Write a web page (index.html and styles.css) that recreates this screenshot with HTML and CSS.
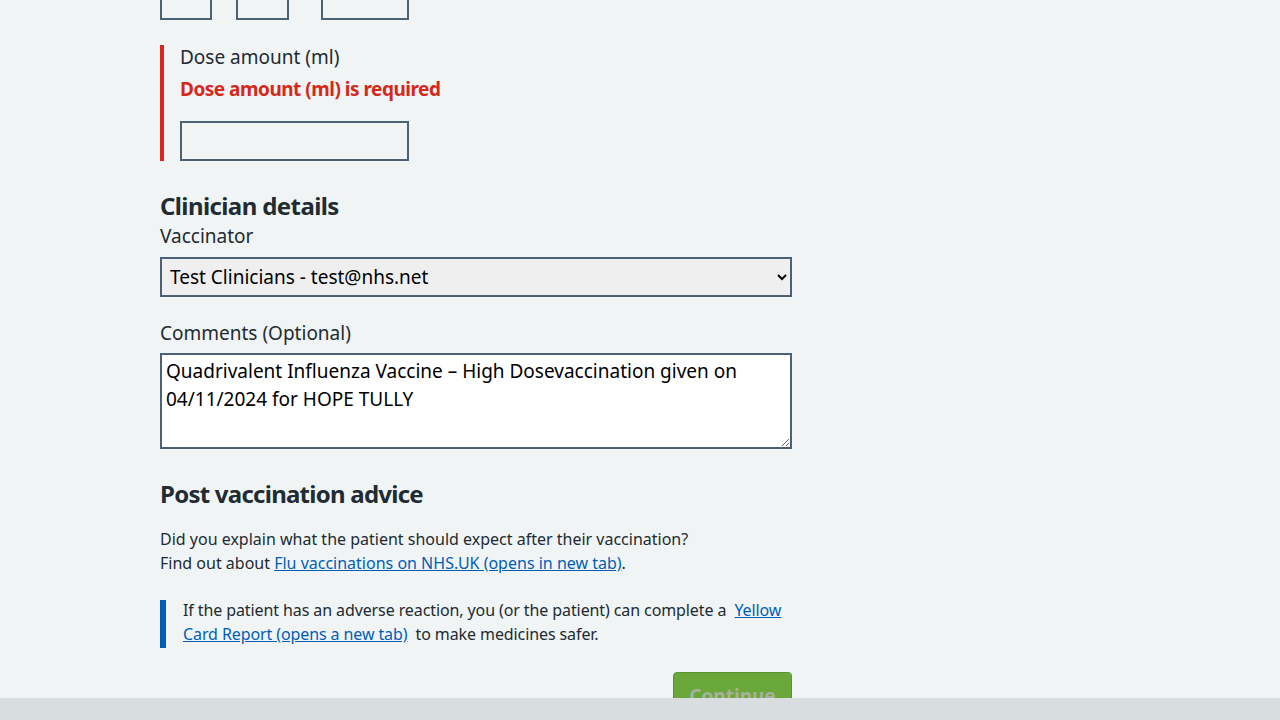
FILE: index.html
```html
<!DOCTYPE html>
<html lang="en">
<head>
<meta charset="utf-8">
<title>Record vaccination</title>
<link rel="stylesheet" href="styles.css">
</head>
<body>
<main class="page">
  <div class="date-row">
    <div class="date-box day"></div>
    <div class="date-box month"></div>
    <div class="date-box year"></div>
  </div>

  <div class="form-group error-group">
    <label class="label label-dose">Dose amount (ml)</label>
    <span class="error-message">Dose amount (ml) is required</span>
    <input class="input dose" type="text">
  </div>

  <h2 class="heading heading-clinician">Clinician details</h2>
  <div class="form-group">
    <label class="label label-select">Vaccinator</label>
    <select class="select">
      <option>Test Clinicians - test@nhs.net</option>
    </select>
  </div>

  <div class="form-group">
    <label class="label label-comments">Comments (Optional)</label>
    <textarea class="textarea" rows="3">Quadrivalent Influenza Vaccine – High Dosevaccination given on 04/11/2024 for HOPE TULLY</textarea>
  </div>

  <h2 class="heading heading-post">Post vaccination advice</h2>
  <p class="body">Did you explain what the patient should expect after their vaccination?<br>Find out about <a href="#">Flu vaccinations on NHS.UK (opens in new tab)</a>.</p>

  <div class="inset">
    <p>If the patient has an adverse reaction, you (or the patient) can complete a&nbsp; <a href="#">Yellow Card Report (opens a new tab)</a> &nbsp;to make medicines safer.</p>
  </div>

  <div class="actions">
    <button class="button" type="button">Continue</button>
  </div>
</main>
<div class="bottom-bar"></div>
</body>
</html>
```

FILE: styles.css
```css
html, body {
  margin: 0;
  padding: 0;
  background: #f0f4f5;
  height: 720px;
  overflow: hidden;
}

body {
  font-family: "Noto Sans", "Liberation Sans", Arial, sans-serif;
  color: #212b32;
}

.page {
  width: 632px;
  margin: -20px 0 0 160px;
}

.date-row {
  display: flex;
  gap: 24px;
}

.date-box {
  height: 40px;
  box-sizing: border-box;
  border: 2px solid #4c6272;
}

.day { width: 52px; }
.month { width: 53px; margin-right: 8px; }
.year { width: 88px; }

.form-group {
  display: flex;
  flex-direction: column;
  align-items: flex-start;
}

.error-group {
  margin-top: 25px;
  border-left: 4px solid #d5281b;
  padding-left: 16px;
}

.label {
  font-size: 19px;
  line-height: 24px;
}

.label-dose { margin-bottom: 8px; }
.label-select { margin-bottom: 9px; }
.label-comments { margin-bottom: 8px; }

.error-message {
  color: #d5281b;
  font-weight: bold;
  font-size: 19px;
  line-height: 24px;
  letter-spacing: -0.5px;
  margin-bottom: 20px;
}

.input {
  box-sizing: border-box;
  height: 40px;
  border: 2px solid #4c6272;
  background: transparent;
  font: inherit;
  font-size: 19px;
  padding: 4px;
  margin: 0;
}

.dose { width: 229px; }

.heading {
  font-size: 24px;
  line-height: 32px;
  font-weight: bold;
  letter-spacing: -0.6px;
  margin: 0;
}

.heading-clinician {
  margin-top: 29px;
  margin-bottom: 2px;
}

.select {
  box-sizing: border-box;
  width: 632px;
  height: 40px;
  border: 2px solid #4c6272;
  border-radius: 0;
  background: #efefef;
  color: #000;
  font-family: inherit;
  font-size: 19px;
  padding: 0 4px;
  margin: 0 0 24px;
}

.textarea {
  box-sizing: border-box;
  width: 632px;
  height: 96px;
  border: 2px solid #4c6272;
  background: #fff;
  color: #000;
  font-family: inherit;
  font-size: 19px;
  line-height: 28px;
  padding: 2px 4px;
  margin: 0;
  resize: vertical;
}

.heading-post {
  margin-top: 29px;
  margin-bottom: 17px;
  letter-spacing: -0.75px;
}

.body {
  font-size: 16px;
  line-height: 24px;
  margin: 0 0 25px;
}

a {
  color: #005eb8;
  text-decoration: underline;
}

.inset {
  display: flow-root;
  border-left: 6px solid #005eb8;
  padding-left: 17px;
  margin-bottom: 24px;
}

.inset p {
  font-size: 16px;
  line-height: 24px;
  margin: -2px 0 2px;
  letter-spacing: -0.1px;
}

.actions {
  display: flex;
  justify-content: flex-end;
}

.button {
  width: 119px;
  height: 48px;
  background: #6aa83b;
  border: 1px solid #5a9133;
  border-radius: 4px;
  color: #a8b0a0;
  font-family: inherit;
  font-weight: bold;
  font-size: 19px;
  padding: 0;
}

.bottom-bar {
  position: fixed;
  left: 0;
  right: 0;
  bottom: 0;
  height: 22px;
  background: #d8dde0;
}
```
